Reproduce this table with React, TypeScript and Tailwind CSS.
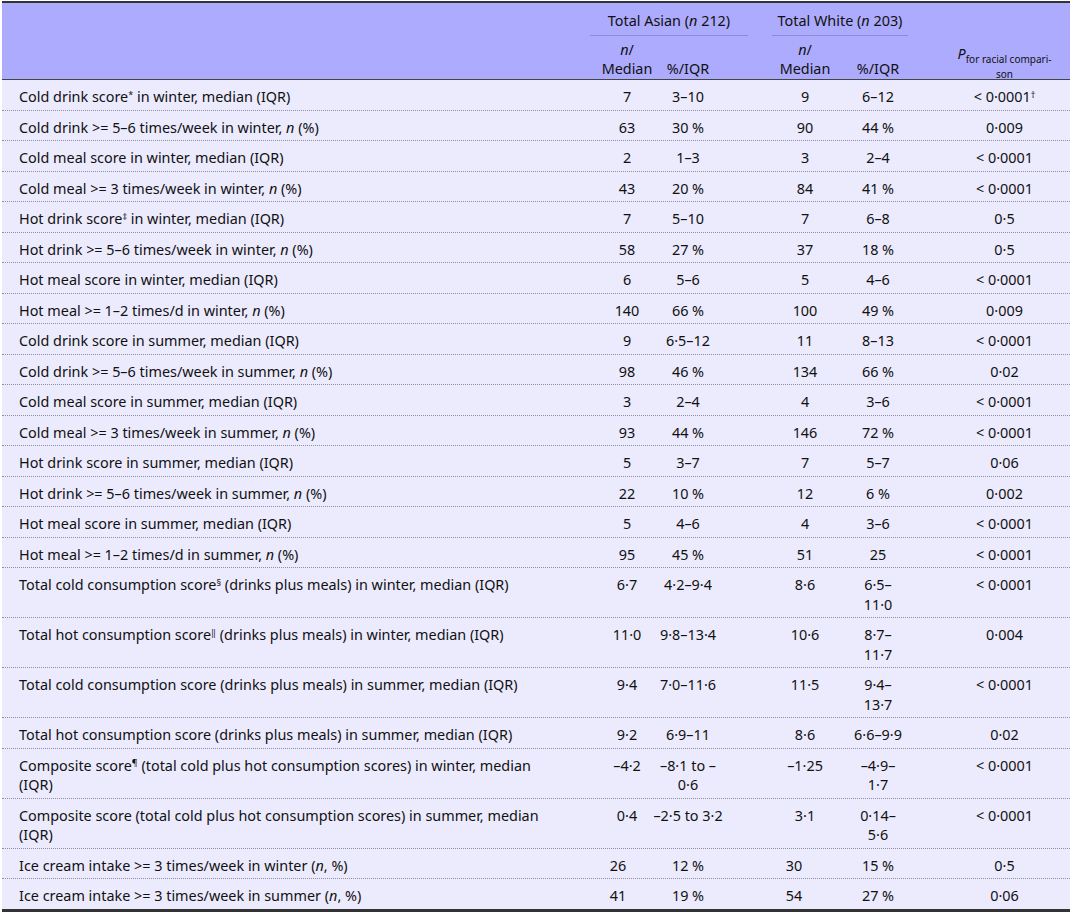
import type { ReactNode } from 'react';

interface Row {
  label: ReactNode;
  an: string;
  ap: string;
  wn: string;
  wp: string;
  p: ReactNode;
  shift?: boolean;
}

const N = () => <i>n</i>;
const Sup = ({ c }: { c: string }) => <sup className="text-[9px]">{c}</sup>;

const rows: Row[] = [
  { label: <>Cold drink score<Sup c="*" /> in winter, median (IQR)</>, an: '7', ap: '3–10', wn: '9', wp: '6–12', p: <>&lt; 0·0001<Sup c="†" /></> },
  { label: <>Cold drink &gt;= 5–6 times/week in winter, <N /> (%)</>, an: '63', ap: '30 %', wn: '90', wp: '44 %', p: '0·009' },
  { label: 'Cold meal score in winter, median (IQR)', an: '2', ap: '1–3', wn: '3', wp: '2–4', p: '< 0·0001' },
  { label: <>Cold meal &gt;= 3 times/week in winter, <N /> (%)</>, an: '43', ap: '20 %', wn: '84', wp: '41 %', p: '< 0·0001' },
  { label: <>Hot drink score<Sup c="‡" /> in winter, median (IQR)</>, an: '7', ap: '5–10', wn: '7', wp: '6–8', p: '0·5' },
  { label: <>Hot drink &gt;= 5–6 times/week in winter, <N /> (%)</>, an: '58', ap: '27 %', wn: '37', wp: '18 %', p: '0·5' },
  { label: 'Hot meal score in winter, median (IQR)', an: '6', ap: '5–6', wn: '5', wp: '4–6', p: '< 0·0001' },
  { label: <>Hot meal &gt;= 1–2 times/d in winter, <N /> (%)</>, an: '140', ap: '66 %', wn: '100', wp: '49 %', p: '0·009' },
  { label: 'Cold drink score in summer, median (IQR)', an: '9', ap: '6·5–12', wn: '11', wp: '8–13', p: '< 0·0001' },
  { label: <>Cold drink &gt;= 5–6 times/week in summer, <N /> (%)</>, an: '98', ap: '46 %', wn: '134', wp: '66 %', p: '0·02' },
  { label: 'Cold meal score in summer, median (IQR)', an: '3', ap: '2–4', wn: '4', wp: '3–6', p: '< 0·0001' },
  { label: <>Cold meal &gt;= 3 times/week in summer, <N /> (%)</>, an: '93', ap: '44 %', wn: '146', wp: '72 %', p: '< 0·0001' },
  { label: 'Hot drink score in summer, median (IQR)', an: '5', ap: '3–7', wn: '7', wp: '5–7', p: '0·06' },
  { label: <>Hot drink &gt;= 5–6 times/week in summer, <N /> (%)</>, an: '22', ap: '10 %', wn: '12', wp: '6 %', p: '0·002' },
  { label: 'Hot meal score in summer, median (IQR)', an: '5', ap: '4–6', wn: '4', wp: '3–6', p: '< 0·0001' },
  { label: <>Hot meal &gt;= 1–2 times/d in summer, <N /> (%)</>, an: '95', ap: '45 %', wn: '51', wp: '25', p: '< 0·0001' },
  { label: <>Total cold consumption score<Sup c="§" /> (drinks plus meals) in winter, median (IQR)</>, an: '6·7', ap: '4·2–9·4', wn: '8·6', wp: '6·5–\n11·0', p: '< 0·0001' },
  { label: <>Total hot consumption score<Sup c="‖" /> (drinks plus meals) in winter, median (IQR)</>, an: '11·0', ap: '9·8–13·4', wn: '10·6', wp: '8·7–\n11·7', p: '0·004' },
  { label: 'Total cold consumption score (drinks plus meals) in summer, median (IQR)', an: '9·4', ap: '7·0–11·6', wn: '11·5', wp: '9·4–\n13·7', p: '< 0·0001' },
  { label: 'Total hot consumption score (drinks plus meals) in summer, median (IQR)', an: '9·2', ap: '6·9–11', wn: '8·6', wp: '6·6–9·9', p: '0·02' },
  { label: <>Composite score<Sup c="¶" /> (total cold plus hot consumption scores) in winter, median<br />(IQR)</>, an: '–4·2', ap: '–8·1 to –\n0·6', wn: '–1·25', wp: '–4·9–\n1·7', p: '< 0·0001' },
  { label: <>Composite score (total cold plus hot consumption scores) in summer, median<br />(IQR)</>, an: '0·4', ap: '–2·5 to 3·2', wn: '3·1', wp: '0·14–\n5·6', p: '< 0·0001' },
  { label: <>Ice cream intake &gt;= 3 times/week in winter (<N />, %)</>, an: '26', ap: '12 %', wn: '30', wp: '15 %', p: '0·5', shift: true },
  { label: <>Ice cream intake &gt;= 3 times/week in summer (<N />, %)</>, an: '41', ap: '19 %', wn: '54', wp: '27 %', p: '0·06', shift: true },
];

function Cell({ w, children, className = '' }: { w: string; children: ReactNode; className?: string }) {
  return (
    <div className={`${w} flex shrink-0 justify-center ${className}`}>
      <span className="whitespace-pre text-center">{children}</span>
    </div>
  );
}

export default function App() {
  return (
    <div className="min-h-[912px] bg-white pt-px pl-[2px]" style={{ fontFamily: '"Noto Sans", "DejaVu Sans", sans-serif' }}>
      <div className="w-[1068px] text-[14.4px] text-[#111]">
        {/* header */}
        <div className="border-t-2 border-b border-t-[#333] border-b-[#444] bg-[#adabfd]">
          <div className="flex h-[33px] items-end">
            <div className="w-[588px] shrink-0" />
            <div className="w-[158px] shrink-0 border-b border-[#8d8bd6] pb-[5px] text-center leading-[19px]">
              Total Asian (<i>n</i> 212)
            </div>
            <div className="w-[24px] shrink-0" />
            <div className="w-[136px] shrink-0 border-b border-[#8d8bd6] pb-[5px] text-center leading-[19px]">
              Total White (<i>n</i> 203)
            </div>
          </div>
          <div className="flex h-[43px] items-start leading-[19px]">
            <div className="w-[594px] shrink-0" />
            <Cell w="w-[62px] pt-[4px]"><i>n</i>/{'\n'}Median</Cell>
            <Cell w="w-[60px] pt-[23px]">%/IQR</Cell>
            <div className="w-[58px] shrink-0" />
            <Cell w="w-[58px] pt-[4px]"><i>n</i>/{'\n'}Median</Cell>
            <Cell w="w-[88px] pt-[23px]">%/IQR</Cell>
            <div className="flex flex-1 justify-center pt-[9px] pl-[17px]">
              <span className="text-center">
                <span className="block leading-[18px]">
                  <i>P</i>
                  <span className="align-sub text-[10px]">for racial compari-</span>
                </span>
                <span className="block text-[10px] leading-[12px]">son</span>
              </span>
            </div>
          </div>
        </div>
        {/* body */}
        <div className="border-b-[3px] border-[#333] bg-[#ecebfe]">
          {rows.map((r, i) => (
            <div
              key={i}
              className={`flex items-start pt-[7px] pb-[3px] leading-[19.5px] ${i < rows.length - 1 ? 'border-b border-dotted border-[#8f8fa0]' : ''}`}
            >
              <div className="w-[594px] shrink-0 whitespace-nowrap pl-[17px]">{r.label}</div>
              <Cell w="w-[62px]" className={r.shift ? 'pr-[18px]' : ''}>{r.an}</Cell>
              <Cell w="w-[60px]">{r.ap}</Cell>
              <div className="w-[58px] shrink-0" />
              <Cell w="w-[58px]" className={r.shift ? 'pr-[22px]' : ''}>{r.wn}</Cell>
              <Cell w="w-[88px]">{r.wp}</Cell>
              <div className="flex flex-1 justify-center pl-[17px]">
                <span className="whitespace-nowrap">{r.p}</span>
              </div>
            </div>
          ))}
        </div>
      </div>
    </div>
  );
}
